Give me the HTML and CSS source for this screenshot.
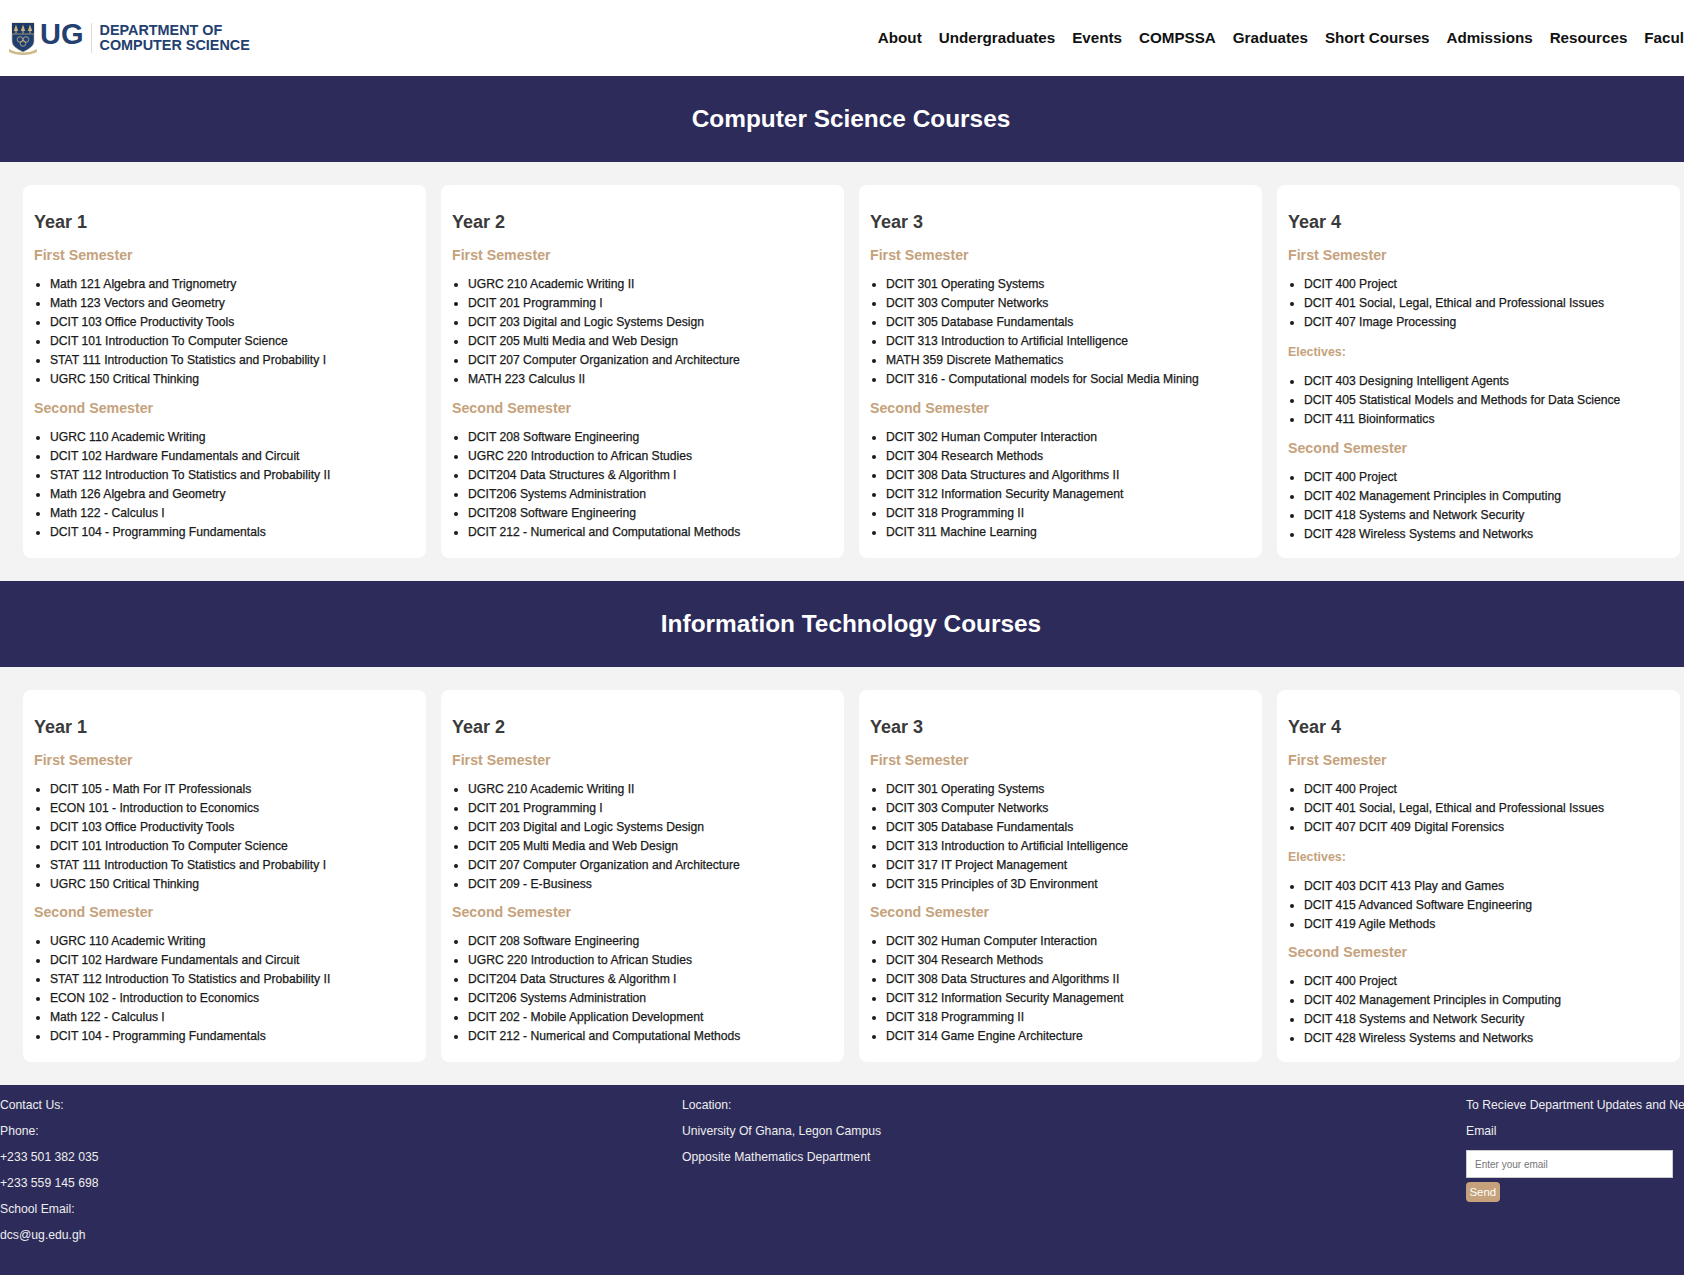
FILE: index.html
```html
<!DOCTYPE html>
<html lang="en">
<head>
    <meta charset="UTF-8">
    <meta name="viewport" content="width=device-width, initial-scale=1.0">
    <title>Courses - Department of Computer Science</title>
    <link rel="stylesheet" href="styles.css">
</head>
<body>
    <!-- Header -->
    <header class="site-header">
        <a class="logo" href="#">
            <svg class="crest" viewBox="0 0 28 34" width="28" height="34">
                <path d="M3 2h22v18c0 5-5 8-11 11C8 28 3 25 3 20z" fill="#1f3f73" stroke="#c9b27f" stroke-width=".6"/>
                <path d="M3 2h22v11H3z" fill="#1d3a66"/>
                <path d="M7 3.500l2.200 6.500H4.800zM14 3.500l2.200 6.500h-4.400zM21 3.500l2.200 6.500h-4.400z" fill="#c9b27f"/>
                <path d="M6.500 9.500h1v3h-1zM13.500 9.500h1v3h-1zM20.500 9.500h1v3h-1z" fill="#c9b27f"/>
                <path d="M3 13h22" stroke="#c9b27f" stroke-width=".7"/>
                <circle cx="11" cy="18.500" r="2.800" fill="none" stroke="#c9b27f" stroke-width=".8"/>
                <circle cx="17" cy="18.500" r="2.800" fill="none" stroke="#c9b27f" stroke-width=".8"/>
                <circle cx="14" cy="22.500" r="2.800" fill="none" stroke="#c9b27f" stroke-width=".8"/>
                <path d="M0 28c4 2.500 9 3.500 14 3.500s10-1 14-3.500v3c-4 2-9 3-14 3S4 33 0 31z" fill="#cdb98a"/>
            </svg>
            <span class="logo-ug">UG</span>
            <span class="logo-name">DEPARTMENT OF<br>COMPUTER SCIENCE</span>
        </a>
        <nav class="main-nav">
            <a href="#">About</a>
            <a href="#">Undergraduates</a>
            <a href="#">Events</a>
            <a href="#">COMPSSA</a>
            <a href="#">Graduates</a>
            <a href="#">Short Courses</a>
            <a href="#">Admissions</a>
            <a href="#">Resources</a>
            <a href="#">Faculty</a>
        </nav>
    </header>

    <!-- Computer Science -->
    <h1 class="banner">Computer Science Courses</h1>
    <section class="years">
        <div class="card">
            <h2>Year 1</h2>
            <h3>First Semester</h3>
            <ul>
                <li>Math 121 Algebra and Trignometry</li>
                <li>Math 123 Vectors and Geometry</li>
                <li>DCIT 103 Office Productivity Tools</li>
                <li>DCIT 101 Introduction To Computer Science</li>
                <li>STAT 111 Introduction To Statistics and Probability I</li>
                <li>UGRC 150 Critical Thinking</li>
            </ul>
            <h3>Second Semester</h3>
            <ul>
                <li>UGRC 110 Academic Writing</li>
                <li>DCIT 102 Hardware Fundamentals and Circuit</li>
                <li>STAT 112 Introduction To Statistics and Probability II</li>
                <li>Math 126 Algebra and Geometry</li>
                <li>Math 122 - Calculus I</li>
                <li>DCIT 104 - Programming Fundamentals</li>
            </ul>
        </div>
        <div class="card">
            <h2>Year 2</h2>
            <h3>First Semester</h3>
            <ul>
                <li>UGRC 210 Academic Writing II</li>
                <li>DCIT 201 Programming I</li>
                <li>DCIT 203 Digital and Logic Systems Design</li>
                <li>DCIT 205 Multi Media and Web Design</li>
                <li>DCIT 207 Computer Organization and Architecture</li>
                <li>MATH 223 Calculus II</li>
            </ul>
            <h3>Second Semester</h3>
            <ul>
                <li>DCIT 208 Software Engineering</li>
                <li>UGRC 220 Introduction to African Studies</li>
                <li>DCIT204 Data Structures &amp; Algorithm I</li>
                <li>DCIT206 Systems Administration</li>
                <li>DCIT208 Software Engineering</li>
                <li>DCIT 212 - Numerical and Computational Methods</li>
            </ul>
        </div>
        <div class="card">
            <h2>Year 3</h2>
            <h3>First Semester</h3>
            <ul>
                <li>DCIT 301 Operating Systems</li>
                <li>DCIT 303 Computer Networks</li>
                <li>DCIT 305 Database Fundamentals</li>
                <li>DCIT 313 Introduction to Artificial Intelligence</li>
                <li>MATH 359 Discrete Mathematics</li>
                <li>DCIT 316 - Computational models for Social Media Mining</li>
            </ul>
            <h3>Second Semester</h3>
            <ul>
                <li>DCIT 302 Human Computer Interaction</li>
                <li>DCIT 304 Research Methods</li>
                <li>DCIT 308 Data Structures and Algorithms II</li>
                <li>DCIT 312 Information Security Management</li>
                <li>DCIT 318 Programming II</li>
                <li>DCIT 311 Machine Learning</li>
            </ul>
        </div>
        <div class="card">
            <h2>Year 4</h2>
            <h3>First Semester</h3>
            <ul>
                <li>DCIT 400 Project</li>
                <li>DCIT 401 Social, Legal, Ethical and Professional Issues</li>
                <li>DCIT 407 Image Processing</li>
            </ul>
            <h4>Electives:</h4>
            <ul>
                <li>DCIT 403 Designing Intelligent Agents</li>
                <li>DCIT 405 Statistical Models and Methods for Data Science</li>
                <li>DCIT 411 Bioinformatics</li>
            </ul>
            <h3>Second Semester</h3>
            <ul>
                <li>DCIT 400 Project</li>
                <li>DCIT 402 Management Principles in Computing</li>
                <li>DCIT 418 Systems and Network Security</li>
                <li>DCIT 428 Wireless Systems and Networks</li>
            </ul>
        </div>
    </section>

    <!-- Information Technology -->
    <h1 class="banner">Information Technology Courses</h1>
    <section class="years">
        <div class="card">
            <h2>Year 1</h2>
            <h3>First Semester</h3>
            <ul>
                <li>DCIT 105 - Math For IT Professionals</li>
                <li>ECON 101 - Introduction to Economics</li>
                <li>DCIT 103 Office Productivity Tools</li>
                <li>DCIT 101 Introduction To Computer Science</li>
                <li>STAT 111 Introduction To Statistics and Probability I</li>
                <li>UGRC 150 Critical Thinking</li>
            </ul>
            <h3>Second Semester</h3>
            <ul>
                <li>UGRC 110 Academic Writing</li>
                <li>DCIT 102 Hardware Fundamentals and Circuit</li>
                <li>STAT 112 Introduction To Statistics and Probability II</li>
                <li>ECON 102 - Introduction to Economics</li>
                <li>Math 122 - Calculus I</li>
                <li>DCIT 104 - Programming Fundamentals</li>
            </ul>
        </div>
        <div class="card">
            <h2>Year 2</h2>
            <h3>First Semester</h3>
            <ul>
                <li>UGRC 210 Academic Writing II</li>
                <li>DCIT 201 Programming I</li>
                <li>DCIT 203 Digital and Logic Systems Design</li>
                <li>DCIT 205 Multi Media and Web Design</li>
                <li>DCIT 207 Computer Organization and Architecture</li>
                <li>DCIT 209 - E-Business</li>
            </ul>
            <h3>Second Semester</h3>
            <ul>
                <li>DCIT 208 Software Engineering</li>
                <li>UGRC 220 Introduction to African Studies</li>
                <li>DCIT204 Data Structures &amp; Algorithm I</li>
                <li>DCIT206 Systems Administration</li>
                <li>DCIT 202 - Mobile Application Development</li>
                <li>DCIT 212 - Numerical and Computational Methods</li>
            </ul>
        </div>
        <div class="card">
            <h2>Year 3</h2>
            <h3>First Semester</h3>
            <ul>
                <li>DCIT 301 Operating Systems</li>
                <li>DCIT 303 Computer Networks</li>
                <li>DCIT 305 Database Fundamentals</li>
                <li>DCIT 313 Introduction to Artificial Intelligence</li>
                <li>DCIT 317 IT Project Management</li>
                <li>DCIT 315 Principles of 3D Environment</li>
            </ul>
            <h3>Second Semester</h3>
            <ul>
                <li>DCIT 302 Human Computer Interaction</li>
                <li>DCIT 304 Research Methods</li>
                <li>DCIT 308 Data Structures and Algorithms II</li>
                <li>DCIT 312 Information Security Management</li>
                <li>DCIT 318 Programming II</li>
                <li>DCIT 314 Game Engine Architecture</li>
            </ul>
        </div>
        <div class="card">
            <h2>Year 4</h2>
            <h3>First Semester</h3>
            <ul>
                <li>DCIT 400 Project</li>
                <li>DCIT 401 Social, Legal, Ethical and Professional Issues</li>
                <li>DCIT 407 DCIT 409 Digital Forensics</li>
            </ul>
            <h4>Electives:</h4>
            <ul>
                <li>DCIT 403 DCIT 413 Play and Games</li>
                <li>DCIT 415 Advanced Software Engineering</li>
                <li>DCIT 419 Agile Methods</li>
            </ul>
            <h3>Second Semester</h3>
            <ul>
                <li>DCIT 400 Project</li>
                <li>DCIT 402 Management Principles in Computing</li>
                <li>DCIT 418 Systems and Network Security</li>
                <li>DCIT 428 Wireless Systems and Networks</li>
            </ul>
        </div>
    </section>

    <!-- Footer -->
    <footer class="site-footer">
        <div class="footer-col contact">
            <p>Contact Us:</p>
            <p>Phone:</p>
            <p>+233 501 382 035</p>
            <p>+233 559 145 698</p>
            <p>School Email:</p>
            <p>dcs@ug.edu.gh</p>
        </div>
        <div class="footer-col location">
            <p>Location:</p>
            <p>University Of Ghana, Legon Campus</p>
            <p>Opposite Mathematics Department</p>
        </div>
        <form class="footer-col newsletter">
            <p class="nowrap">To Recieve Department Updates and News</p>
            <p>Email</p>
            <input type="email" placeholder="Enter your email">
            <button type="button">Send</button>
        </form>
    </footer>
</body>
</html>
```

FILE: styles.css
```css
/* General Styles */
html, body {
    overflow-x: hidden;
}

body {
    margin: 0;
    font-family: "Liberation Sans", Arial, sans-serif;
    background-color: #f3f3f3;
    color: #111;
}

/* Header */
.site-header {
    display: flex;
    justify-content: space-between;
    align-items: center;
    height: 76px;
    background-color: #fff;
    padding-left: 9px;
}

.logo {
    display: flex;
    align-items: center;
    text-decoration: none;
    color: #23406f;
    flex-shrink: 0;
}

.crest {
    margin-right: 3px;
}

.logo-ug {
    font-size: 29px;
    line-height: 22px;
    font-weight: bold;
    padding-right: 7px;
    padding-bottom: 8px;
    margin-right: 8px;
    border-right: 1px solid #e0dcd2;
}

.logo-name {
    font-size: 14.4px;
    font-weight: bold;
    line-height: 15.5px;
}

.main-nav {
    display: flex;
    gap: 17px;
    flex-shrink: 0;
    margin-right: -13.5px;
    padding-bottom: 2px;
}

.main-nav a {
    font-size: 15.2px;
    font-weight: bold;
    color: #111;
    text-decoration: none;
}

/* Section Banner */
.banner {
    margin: 0;
    height: 86px;
    line-height: 86px;
    padding-left: 18px;
    background-color: #2d2b5a;
    color: #fff;
    text-align: center;
    font-size: 24.4px;
}

/* Year Cards */
.years {
    display: grid;
    grid-template-columns: repeat(4, 403px);
    gap: 15px;
    padding: 23px 4px 23px 23px;
}

.card {
    background-color: #fff;
    border-radius: 8px;
    padding: 26px 11px 14px;
    box-sizing: border-box;
    height: 372.5px;
}

.card h2 {
    margin: 0 0 13px;
    font-size: 18px;
    line-height: 22px;
    font-weight: bold;
    color: #3a3a3a;
}

.card h3 {
    margin: 0 0 11px;
    font-size: 14.2px;
    line-height: 18px;
    color: #c5a27c;
}

.card h4 {
    margin: 11px 0 11px;
    font-size: 12.4px;
    line-height: 18px;
    color: #c5a27c;
}

.card ul {
    margin: 0 0 9.5px;
    padding-left: 16px;
    list-style: disc;
}

.card li {
    font-size: 12.15px;
    line-height: 19px;
    color: #1a1a1a;
    -webkit-text-stroke: 0.25px #1a1a1a;
}

/* Footer */
.site-footer {
    display: flex;
    background-color: #2d2b5a;
    color: #eee;
    height: 191px;
    box-sizing: border-box;
    padding-top: 13px;
    font-size: 12.2px;
}

.footer-col p {
    margin: 0 0 11px;
    line-height: 15px;
}

.contact {
    width: 682px;
    flex-shrink: 0;
}

.location {
    width: 784px;
    flex-shrink: 0;
}

.newsletter {
    flex-shrink: 0;
    width: 300px;
}

.nowrap {
    white-space: nowrap;
}

.newsletter input {
    display: block;
    width: 207px;
    height: 28px;
    box-sizing: border-box;
    padding: 0 8px;
    border: 1px solid #ccc;
    font-family: inherit;
    font-size: 10px;
    background-color: #fff;
    margin-bottom: 4px;
}

.newsletter button {
    display: block;
    height: 20px;
    padding: 0 3.5px;
    border: none;
    border-radius: 4px;
    background-color: #c5a27c;
    color: #fff;
    font-family: inherit;
    font-size: 11.4px;
}
```
